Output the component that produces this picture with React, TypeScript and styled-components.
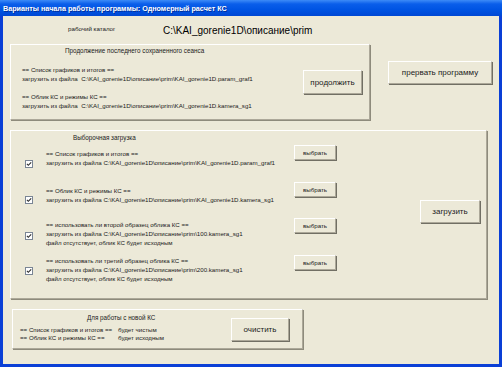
import React from 'react';
import styled, { createGlobalStyle } from 'styled-components';

const GlobalStyle = createGlobalStyle`
  html, body {
    margin: 0;
    padding: 0;
    background: #ece9d8;
  }
  body {
    font-family: "Liberation Sans", Arial, sans-serif;
  }
`;

const Window = styled.div`
  width: 502px;
  height: 367px;
  display: flex;
  flex-direction: column;
  overflow: hidden;
`;

const TitleBar = styled.div`
  height: 16px;
  flex-shrink: 0;
  display: flex;
  align-items: center;
  padding-left: 3px;
  background: linear-gradient(180deg, #3d8bf7 0%, #0a5eea 25%, #0054e3 60%, #0048d4 100%);
  color: #fff;
  font-size: 7.2px;
  font-weight: bold;
  text-shadow: 1px 1px 0 rgba(0, 0, 60, 0.45);
`;

const Frame = styled.div`
  flex: 1;
  display: flex;
  border: 3px solid #0a3fd6;
  border-top: none;
  background: #ece9d8;
`;

const Client = styled.div`
  flex: 1;
  display: flex;
  flex-direction: column;
  background: #ece9d8;
  color: #1a1a1a;
`;

const Header = styled.div`
  height: 28px;
  display: flex;
  align-items: flex-start;
  padding: 9px 0 0 65px;
  box-sizing: border-box;
`;

const DirLabel = styled.div`
  width: 95px;
  font-size: 6.2px;
  line-height: 8px;
`;

const DirPath = styled.div`
  font-size: 10px;
  line-height: 12px;
  color: #000;
`;

const TopRow = styled.div`
  display: flex;
  align-items: flex-start;
  padding-left: 7px;
`;

const Panel = styled.div<{ $w: number; $h: number }>`
  box-sizing: border-box;
  width: ${p => p.$w}px;
  height: ${p => p.$h}px;
  border-top: 1px solid #ffffff;
  border-left: 1px solid #ffffff;
  border-right: 1px solid #aca899;
  border-bottom: 1px solid #aca899;
  box-shadow: 1px 1px 0 #8e8b7c;
  display: flex;
  flex-direction: column;
`;

const PanelTitle = styled.div<{ $left: number; $top: number }>`
  font-size: 6.3px;
  line-height: 8px;
  padding-left: ${p => p.$left}px;
  margin-top: ${p => p.$top}px;
  white-space: nowrap;
`;

const Button = styled.div<{ $w: number; $h: number; $size?: number }>`
  box-sizing: border-box;
  width: ${p => p.$w}px;
  height: ${p => p.$h}px;
  flex-shrink: 0;
  display: flex;
  align-items: center;
  justify-content: center;
  background: #ece9d8;
  border-top: 1px solid #ffffff;
  border-left: 1px solid #ffffff;
  border-right: 1px solid #aca899;
  border-bottom: 1px solid #aca899;
  box-shadow: 1px 1px 0 #716f64;
  font-size: ${p => p.$size ?? 8}px;
  color: #222;
  white-space: nowrap;
`;

const StopButton = styled(Button)`
  margin: 17px 0 0 18px;
`;

const ResumeBody = styled.div`
  display: flex;
  align-items: flex-start;
`;

const TextColumn = styled.div<{ $left: number; $width: number }>`
  margin-left: ${p => p.$left}px;
  width: ${p => p.$width}px;
  flex-shrink: 0;
`;

const LineGroup = styled.div<{ $top: number; $lh?: number }>`
  margin-top: ${p => p.$top}px;
  font-size: 6.15px;
  line-height: ${p => p.$lh ?? 9}px;
  white-space: nowrap;
`;

const ResumeButton = styled(Button)`
  margin-top: 15px;
`;

const SelectivePanel = styled(Panel)`
  margin: 10px 0 0 7px;
`;

const SelectiveBody = styled.div`
  display: flex;
  margin-top: 3px;
`;

const RowList = styled.div`
  width: 326px;
  display: flex;
  flex-direction: column;
`;

const LoadRow = styled.div<{ $h: number }>`
  height: ${p => p.$h}px;
  display: grid;
  grid-template-columns: 35px 248px 42px;
  align-items: start;
`;

const CheckCell = styled.div<{ $top: number }>`
  padding: ${p => p.$top}px 0 0 14px;
  line-height: 0;
`;

const RowText = styled.div<{ $top: number }>`
  margin-top: ${p => p.$top}px;
  font-size: 6.15px;
  line-height: 9px;
  white-space: nowrap;
`;

const LoadButton = styled(Button)`
  margin: 55px 0 0 83px;
`;

const NewPanel = styled(Panel)`
  margin: 10px 0 0 9px;
  flex-direction: row;
  align-items: flex-start;
`;

const NewLeft = styled.div`
  width: 218px;
  flex-shrink: 0;
`;

const NewLine = styled.div`
  display: flex;
  padding-left: 7px;
`;

const NewKey = styled.span`
  display: inline-block;
  width: 98px;
  flex-shrink: 0;
`;

const ClearButton = styled(Button)`
  margin-top: 8px;
`;

const CheckBox = () => (
  <svg width="8" height="8" viewBox="0 0 8 8">
    <rect x="0.5" y="0.5" width="7" height="7" fill="#ffffff" stroke="#7a8594" />
    <path d="M1.9 3.9 L3.3 5.3 L6.2 2.3" fill="none" stroke="#2a2a2a" strokeWidth="1.1" />
  </svg>
);

const PATH = 'C:\\KAI_gorenie1D\\описание\\prim';

const rows = [
  {
    h: 37,
    textTop: 4,
    checkTop: 15,
    lines: [
      '== Список графиков и итогов ==',
      `загрузить из файла  ${PATH}\\KAI_gorenie1D.param_graf1`,
    ],
  },
  {
    h: 36,
    textTop: 4,
    checkTop: 14,
    lines: [
      '== Облик КС и режимы КС ==',
      `загрузить из файла  ${PATH}\\KAI_gorenie1D.kamera_sg1`,
    ],
  },
  {
    h: 37,
    textTop: 2,
    checkTop: 14,
    lines: [
      '== использовать ли второй образец облика КС ==',
      `загрузить из файла  ${PATH}\\100.kamera_sg1`,
      'файл отсутствует, облик КС будет исходным',
    ],
  },
  {
    h: 37,
    textTop: 1,
    checkTop: 12,
    lines: [
      '== использовать ли третий образец облика КС ==',
      `загрузить из файла  ${PATH}\\200.kamera_sg1`,
      'файл отсутствует, облик КС будет исходным',
    ],
  },
];

export default function App() {
  return (
    <>
      <GlobalStyle />
      <Window>
        <TitleBar>Варианты начала работы программы: Одномерный расчет КС</TitleBar>
        <Frame>
          <Client>
            <Header>
              <DirLabel>рабочий каталог</DirLabel>
              <DirPath>{PATH}</DirPath>
            </Header>

            <TopRow>
              <Panel $w={360} $h={76}>
                <PanelTitle $left={54} $top={2}>
                  Продолжение последнего сохраненного сеанса
                </PanelTitle>
                <ResumeBody>
                  <TextColumn $left={11} $width={281}>
                    <LineGroup $top={10}>
                      <div>== Список графиков и итогов ==</div>
                      <div>загрузить из файла&nbsp; {PATH}\KAI_gorenie1D.param_graf1</div>
                    </LineGroup>
                    <LineGroup $top={9}>
                      <div>== Облик КС и режимы КС ==</div>
                      <div>загрузить из файла&nbsp; {PATH}\KAI_gorenie1D.kamera_sg1</div>
                    </LineGroup>
                  </TextColumn>
                  <ResumeButton $w={59} $h={24}>продолжить</ResumeButton>
                </ResumeBody>
              </Panel>
              <StopButton $w={104} $h={23}>прервать программу</StopButton>
            </TopRow>

            <SelectivePanel $w={477} $h={169}>
              <PanelTitle $left={62} $top={3}>Выборочная загрузка</PanelTitle>
              <SelectiveBody>
                <RowList>
                  {rows.map((r, i) => (
                    <LoadRow key={i} $h={r.h}>
                      <CheckCell $top={r.checkTop}>
                        <CheckBox />
                      </CheckCell>
                      <RowText $top={r.textTop}>
                        {r.lines.map((l, j) => (
                          <div key={j}>{l}</div>
                        ))}
                      </RowText>
                      <Button $w={42} $h={15} $size={6.2}>выбрать</Button>
                    </LoadRow>
                  ))}
                </RowList>
                <LoadButton $w={60} $h={23}>загрузить</LoadButton>
              </SelectiveBody>
            </SelectivePanel>

            <NewPanel $w={291} $h={40}>
              <NewLeft>
                <PanelTitle $left={74} $top={4}>Для работы с новой КС</PanelTitle>
                <LineGroup $top={4} $lh={8}>
                  <NewLine>
                    <NewKey>== Список графиков и итогов ==</NewKey>
                    <span>будет чистым</span>
                  </NewLine>
                  <NewLine>
                    <NewKey>== Облик КС и режимы КС ==</NewKey>
                    <span>будет исходным</span>
                  </NewLine>
                </LineGroup>
              </NewLeft>
              <ClearButton $w={58} $h={23}>очистить</ClearButton>
            </NewPanel>
          </Client>
        </Frame>
      </Window>
    </>
  );
}
